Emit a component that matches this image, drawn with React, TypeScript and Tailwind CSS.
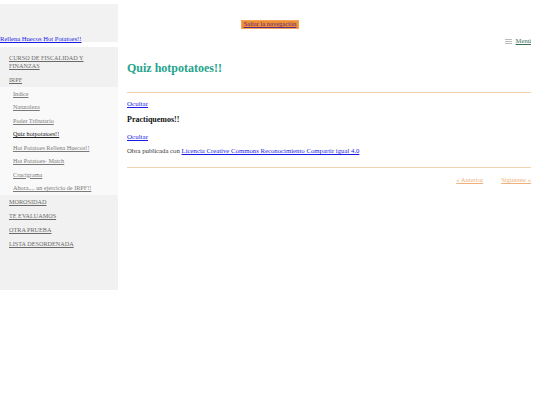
import { Fragment } from "react";

const topBefore = [{ label: ["CURSO DE FISCALIDAD Y", "FINANZAS"] }, { label: ["IRPF"] }];

const subItems = [
  { label: "Indice" },
  { label: "Naturaleza" },
  { label: "Poder Tributario" },
  { label: "Quiz hotpotatoes!!", active: true },
  { label: "Hot Potatoes Rellena Huecos!!" },
  { label: "Hot Potatoes- Match" },
  { label: "Crucigrama" },
  { label: "Ahora.... un ejercicio de IRPF!!" },
];

const topAfter = ["MOROSIDAD", "TE EVALUAMOS", "OTRA PRUEBA", "LISTA DESORDENADA"];

function TopItem({ lines }: { lines: string[] }) {
  return (
    <div className="px-[9px] py-[3px]">
      <a href="#" className="block text-[6.2px] leading-[8px] text-[#6a6a6a] underline">
        {lines.map((l, i) => (
          <Fragment key={l}>
            {i > 0 && <br />}
            {l}
          </Fragment>
        ))}
      </a>
    </div>
  );
}

export default function App() {
  return (
    <div className="relative flex w-[540px] h-[405px] bg-white font-['Liberation_Serif',serif]">
      {/* skip link */}
      <a
        href="#"
        className="absolute left-[241px] top-[20px] w-[58px] h-[9px] flex items-center justify-center bg-[#f08e34] border border-[#f3a35a] text-[6.5px] leading-none text-[#5b2c86] underline"
      >
        Saltar la navegación
      </a>

      <aside className="w-[118px] shrink-0 flex flex-col">
        <div className="mt-[4px] h-[38px] bg-[#f2f2f2] flex items-end">
          <a href="#" className="text-[6.6px] leading-[7px] text-[#1a1ae6] underline whitespace-nowrap">
            Rellena Huecos Hot Potatoes!!
          </a>
        </div>
        <nav className="mt-[5px] h-[243px] bg-[#f1f1f1] pt-[4px]">
          {topBefore.map((t) => (
            <TopItem key={t.label[0]} lines={t.label} />
          ))}
          <div className="bg-[#f9f9f9]">
            {subItems.map((s) => (
              <div key={s.label} className="pl-[13px] pr-[4px] h-[13.5px] flex items-center">
                <a
                  href="#"
                  className={
                    s.active
                      ? "text-[6.2px] leading-none text-[#222] underline whitespace-nowrap"
                      : "text-[6.2px] leading-none text-[#7a7a7a] underline whitespace-nowrap"
                  }
                >
                  {s.label}
                </a>
              </div>
            ))}
          </div>
          {topAfter.map((t) => (
            <TopItem key={t} lines={[t]} />
          ))}
        </nav>
      </aside>

      <main className="flex-1 pl-[9px] pr-[9px] flex flex-col">
        <div className="mt-[37px] h-[8px] flex items-center justify-end gap-[4px]">
          <svg width="7" height="5" viewBox="0 0 7 5" className="shrink-0">
            <rect x="0" y="0" width="7" height="0.8" fill="#aaa" />
            <rect x="0" y="2" width="7" height="0.8" fill="#aaa" />
            <rect x="0" y="4" width="7" height="0.8" fill="#aaa" />
          </svg>
          <a href="#" className="text-[6.6px] leading-none text-[#3d6d58] underline">
            Menú
          </a>
        </div>

        <h1 className="mt-[15px] text-[12px] leading-[16px] font-bold text-[#25a48b]">Quiz hotpotatoes!!</h1>

        <div className="mt-[16px] border-t border-[#f1d3b4]" />

        <a href="#" className="mt-[7px] self-start text-[7px] leading-[8px] text-[#1a1ae6] underline">
          Ocultar
        </a>

        <h2 className="mt-[7px] text-[8px] leading-[10px] font-bold text-[#111]">Practiquemos!!</h2>

        <a href="#" className="mt-[8px] self-start text-[7px] leading-[8px] text-[#1a1ae6] underline">
          Ocultar
        </a>

        <p className="mt-[6px] text-[6.75px] leading-[8px] text-[#333] whitespace-nowrap">
          Obra publicada con{" "}
          <a href="#" className="text-[#1a1ae6] underline">
            Licencia Creative Commons Reconocimiento Compartir igual 4.0
          </a>
        </p>

        <div className="mt-[12px] border-t border-[#f1d3b4]" />

        <div className="mt-[8px] flex justify-end gap-[18px]">
          <a href="#" className="text-[6.6px] leading-[8px] text-[#f0b07c] underline">
            « Anterior
          </a>
          <a href="#" className="text-[6.6px] leading-[8px] text-[#f0b07c] underline">
            Siguiente »
          </a>
        </div>
      </main>
    </div>
  );
}
